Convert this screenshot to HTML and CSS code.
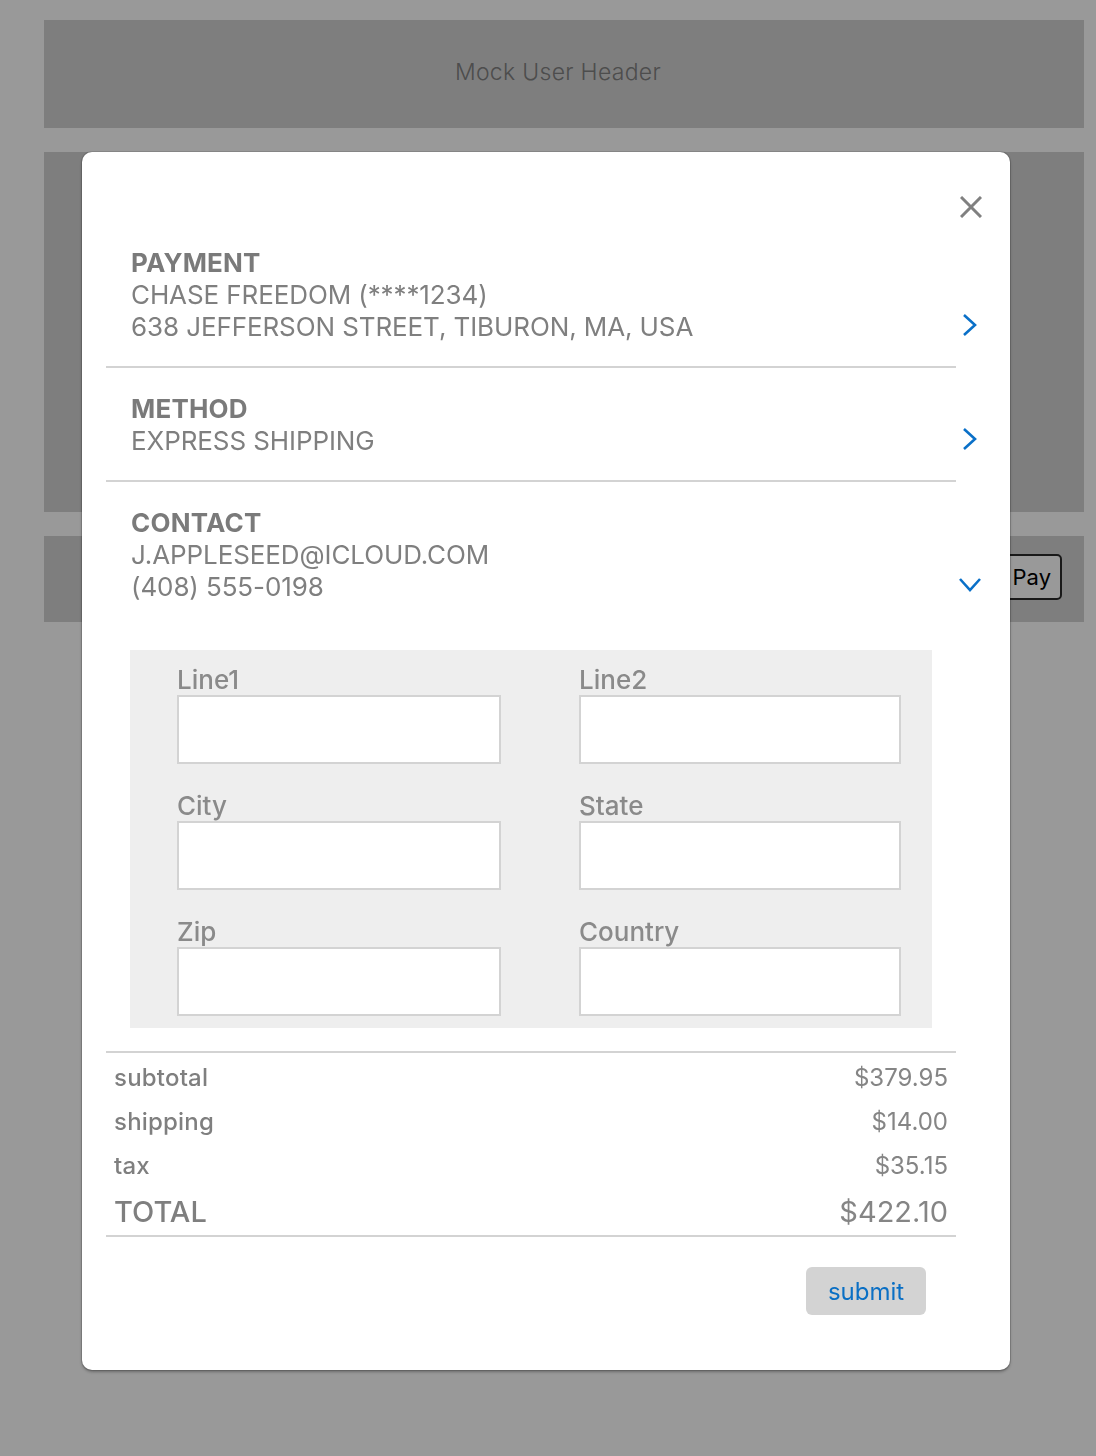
FILE: index.html
```html
<!DOCTYPE html>
<html lang="en">
<head>
<meta charset="utf-8">
<title>Checkout</title>
<link rel="stylesheet" href="styles.css">
</head>
<body>
<div class="page">
  <header class="block block-header">Mock User Header</header>
  <section class="block block-main"></section>
  <section class="block block-pay">
    <button class="pay-btn" type="button">Pay</button>
  </section>
</div>

<div class="overlay"></div>

<div class="modal" role="dialog">
  <div class="modal-top">
    <button class="close" type="button" aria-label="Close">
      <svg width="22" height="22" viewBox="0 0 22 22"><path d="M1 1 L21 21 M21 1 L1 21" stroke="#808080" stroke-width="3" fill="none"/></svg>
    </button>
  </div>

  <div class="content">
    <div class="item">
      <div class="item-head">
        <div class="item-text">
          <div class="item-title">PAYMENT</div>
          <div class="item-line">CHASE FREEDOM (****1234)</div>
          <div class="item-line">638 JEFFERSON STREET, TIBURON, MA, USA</div>
        </div>
        <span class="chev">
          <svg width="22" height="24" viewBox="0 0 22 24"><polyline points="5,2 16,12 5,22" fill="none" stroke="#0a70c8" stroke-width="2.6"/></svg>
        </span>
      </div>
    </div>

    <div class="item">
      <div class="item-head">
        <div class="item-text">
          <div class="item-title">METHOD</div>
          <div class="item-line">EXPRESS SHIPPING</div>
        </div>
        <span class="chev">
          <svg width="22" height="24" viewBox="0 0 22 24"><polyline points="5,2 16,12 5,22" fill="none" stroke="#0a70c8" stroke-width="2.6"/></svg>
        </span>
      </div>
    </div>

    <div class="item">
      <div class="item-head">
        <div class="item-text">
          <div class="item-title">CONTACT</div>
          <div class="item-line">J.APPLESEED@ICLOUD.COM</div>
          <div class="item-line">(408) 555-0198</div>
        </div>
        <span class="chev">
          <svg width="22" height="24" viewBox="0 0 22 24"><polyline points="1,6 11,17 21,6" fill="none" stroke="#0a70c8" stroke-width="2.6"/></svg>
        </span>
      </div>

      <form class="address">
        <label class="field"><span class="field-label">Line1</span><input class="field-input" type="text"></label>
        <label class="field"><span class="field-label">Line2</span><input class="field-input" type="text"></label>
        <label class="field"><span class="field-label">City</span><input class="field-input" type="text"></label>
        <label class="field"><span class="field-label">State</span><input class="field-input" type="text"></label>
        <label class="field"><span class="field-label">Zip</span><input class="field-input" type="text"></label>
        <label class="field"><span class="field-label">Country</span><input class="field-input" type="text"></label>
      </form>
    </div>

    <div class="totals">
      <div class="trow"><span class="tlabel">subtotal</span><span class="tvalue">$379.95</span></div>
      <div class="trow"><span class="tlabel">shipping</span><span class="tvalue">$14.00</span></div>
      <div class="trow"><span class="tlabel">tax</span><span class="tvalue">$35.15</span></div>
      <div class="trow trow-total"><span class="tlabel">TOTAL</span><span class="tvalue">$422.10</span></div>
    </div>

    <div class="actions">
      <button class="submit" type="button">submit</button>
    </div>
  </div>
</div>
</body>
</html>
```

FILE: styles.css
```css
* { box-sizing: border-box; }

html, body {
  margin: 0;
  padding: 0;
}

body {
  background: #ffffff;
  font-family: Inter, "Noto Sans", "Liberation Sans", sans-serif;
  width: 1096px;
  height: 1456px;
  overflow: hidden;
}

.page {
  padding: 20px 12px 0 44px;
  display: flex;
  flex-direction: column;
  gap: 24px;
}

.block {
  background: #d3d3d3;
}

.block-header {
  height: 108px;
  display: flex;
  align-items: center;
  justify-content: center;
  padding: 0 12px 4px 0;
  font-size: 23px;
  font-weight: 300;
  color: #808080;
  letter-spacing: 0.3px;
}

.block-main {
  height: 360px;
}

.block-pay {
  height: 86px;
  display: flex;
  align-items: center;
  justify-content: flex-end;
  padding-right: 22px;
}

.pay-btn {
  height: 46px;
  padding: 0 9px 0 40px;
  background: #ffffff;
  border: 2px solid #2a2a2a;
  border-radius: 5px;
  font-family: Inter, "Noto Sans", sans-serif;
  font-size: 22px;
  color: #000;
  margin-top: -4px;
}

.overlay {
  position: fixed;
  inset: 0;
  background: rgba(0, 0, 0, 0.4);
}

.modal {
  position: absolute;
  top: 152px;
  left: 82px;
  width: 928px;
  height: 1218px;
  background: #ffffff;
  border-radius: 10px;
  box-shadow: 0 0 0 1px rgba(0, 0, 0, 0.12), 0 2px 3px rgba(0, 0, 0, 0.3);
}

.modal-top {
  height: 70px;
  display: flex;
  justify-content: flex-end;
  align-items: flex-start;
  padding: 44px 28px 0 0;
}

.close {
  width: 22px;
  height: 22px;
  padding: 0;
  border: 0;
  background: none;
  display: block;
}

.close svg { display: block; }

.content {
  width: 850px;
  margin-left: 24px;
}

.item {
  padding: 25px 0 23px;
  border-bottom: 2px solid #d3d3d3;
}

.item-head {
  display: flex;
  align-items: flex-end;
  justify-content: space-between;
  padding-left: 25px;
}

.item-text {
  font-size: 26px;
  line-height: 32px;
  color: #7f7f7f;
  letter-spacing: -0.1px;
}

.item-title {
  font-weight: 700;
  color: #7a7a7a;
  letter-spacing: 0.2px;
}

.item-line {
  font-weight: 400;
}

.chev {
  width: 22px;
  height: 32px;
  margin-right: -25px;
  display: flex;
  align-items: center;
  justify-content: center;
  padding-bottom: 4px;
}

.chev svg { display: block; }

.address {
  margin: 47px 24px 0 24px;
  background: #eeeeee;
  padding: 15px 31px 12px 47px;
  display: grid;
  grid-template-columns: 324px 322px;
  column-gap: 78px;
  row-gap: 27px;
}

.field {
  display: flex;
  flex-direction: column;
}

.field-label {
  font-size: 26px;
  line-height: 30px;
  font-weight: 500;
  color: #8a8a8a;
}

.field-input {
  height: 69px;
  width: 100%;
  border: 2px solid #d3d3d3;
  background: #ffffff;
  margin: 0;
  padding: 0 8px;
  font-family: inherit;
  font-size: 22px;
  outline: none;
}

.totals {
  padding: 0 8px;
  border-bottom: 2px solid #d3d3d3;
}

.trow {
  display: flex;
  justify-content: space-between;
  align-items: baseline;
  font-size: 24px;
  line-height: 38px;
  padding-top: 6px;
  color: #7f7f7f;
}

.tlabel { font-weight: 500; letter-spacing: 0.2px; }
.tvalue { font-weight: 400; color: #858585; }

.trow-total {
  font-size: 29px;
  line-height: 46px;
  padding-top: 4px;
}

.trow-total .tlabel { letter-spacing: 0; }

.actions {
  display: flex;
  justify-content: flex-end;
  padding: 30px 30px 0 0;
}

.submit {
  width: 120px;
  height: 48px;
  border: 0;
  border-radius: 6px;
  background: #d3d3d3;
  color: #0a6fc4;
  font-family: inherit;
  font-size: 24px;
  padding: 0;
}
```
